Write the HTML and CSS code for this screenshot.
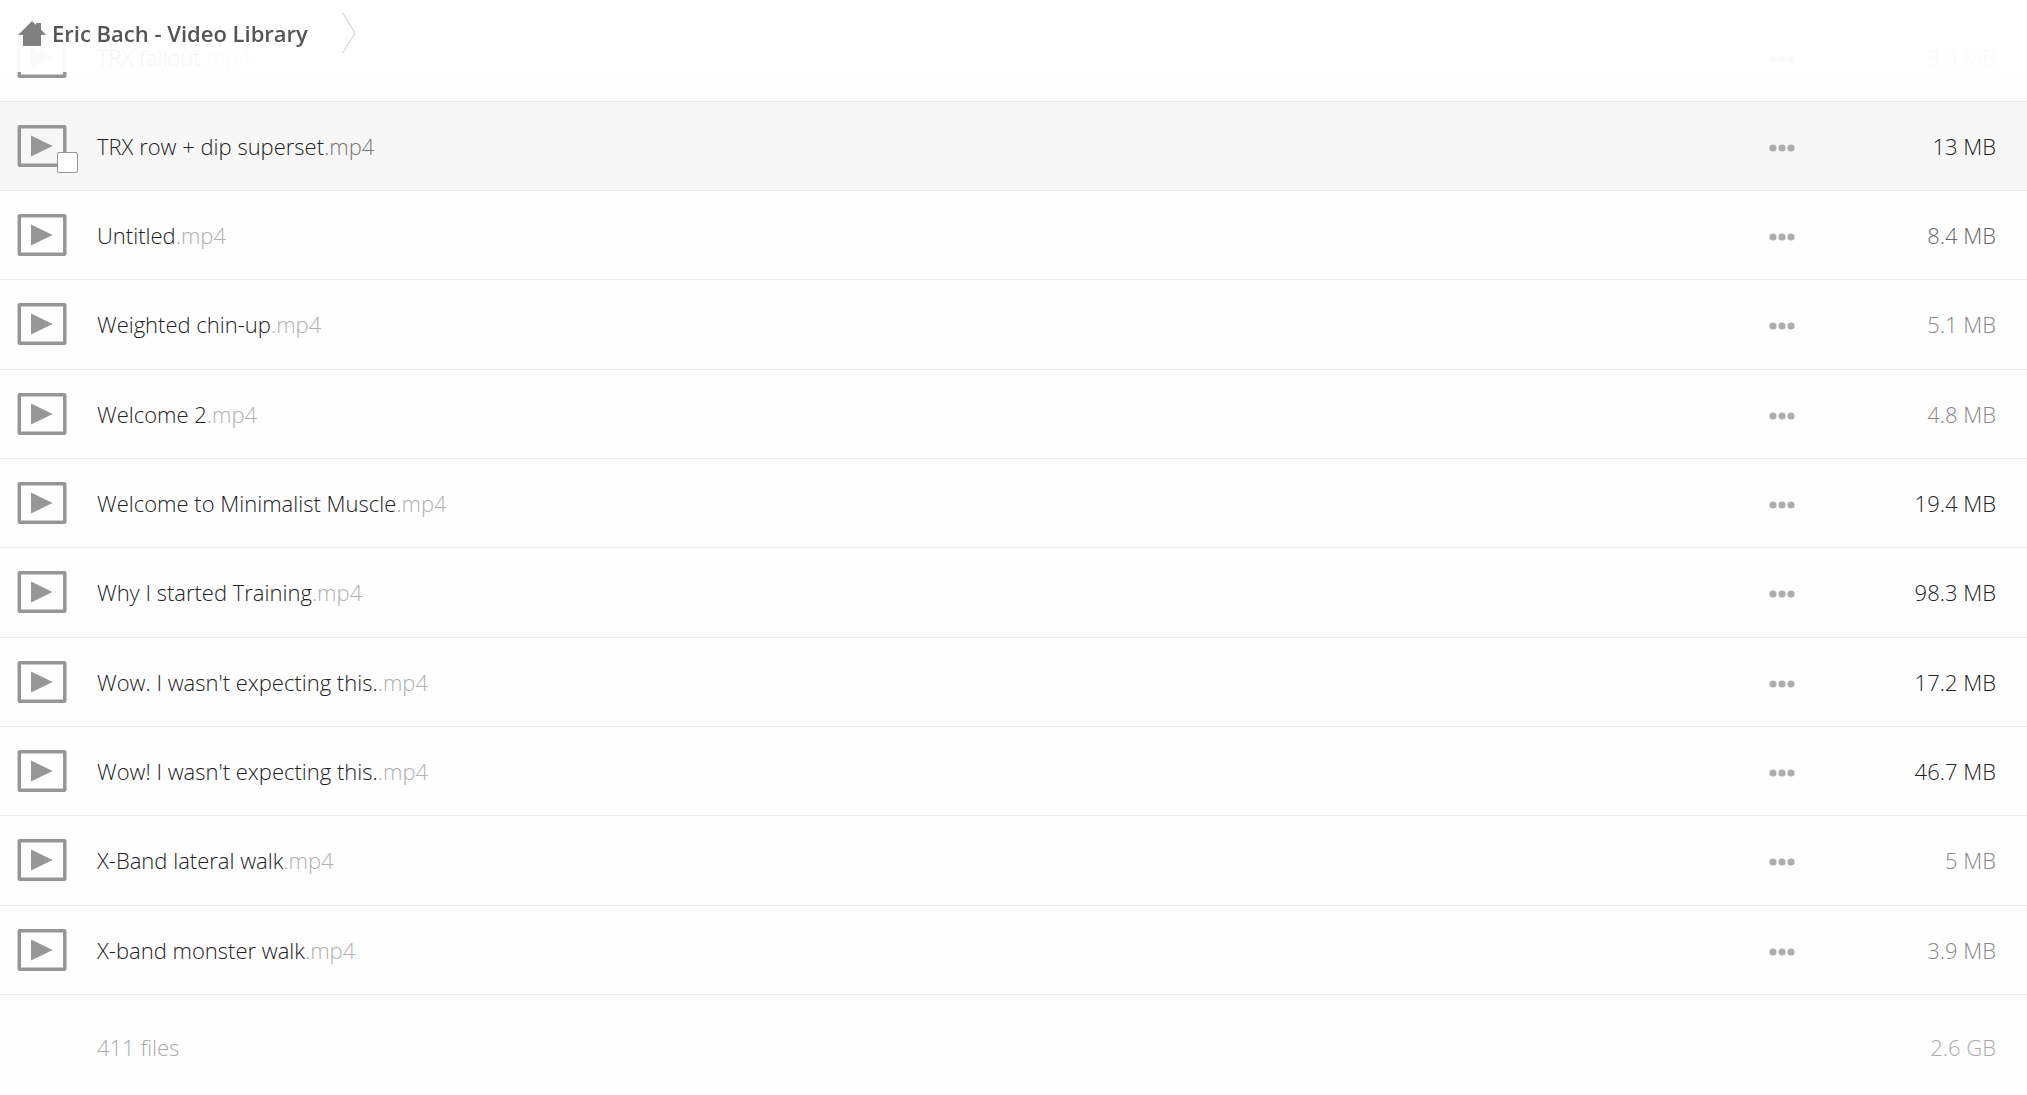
FILE: index.html
```html
<!DOCTYPE html>
<html lang="en">
<head>
<meta charset="utf-8">
<title>Eric Bach - Video Library</title>
<meta name="viewport" content="width=device-width, initial-scale=1">
<link rel="stylesheet" href="styles.css">
</head>
<body>
<svg class="sprite" aria-hidden="true">
  <symbol id="video" viewBox="0 0 50 42">
    <rect x="2.300" y="1.700" width="45.500" height="38.600" rx=".5" fill="none" stroke="currentColor" stroke-width="3.500"/>
    <path d="M14 10.500 35.500 21 14 31.500z" fill="currentColor"/>
  </symbol>
  <symbol id="dots" viewBox="0 0 26 8">
    <circle cx="4" cy="4" r="3.600"/><circle cx="13" cy="4" r="3.600"/><circle cx="22" cy="4" r="3.600"/>
  </symbol>
</svg>
<header class="topbar">
  <nav class="crumbs" aria-label="Breadcrumb">
    <a class="crumb" href="#">
      <svg class="home" viewBox="0 0 28 25" aria-hidden="true"><path d="M14 0 18 4V2h5v6.500L28 14h-5v11H5V14H0z" fill="currentColor"/></svg>
      <span>Eric Bach - Video Library</span>
    </a>
    <svg class="chevron" viewBox="0 0 14 42" aria-hidden="true"><path d="M.5.500 13 21 .5 41.500" fill="none" stroke="currentColor"/></svg>
  </nav>
</header>
<main class="library">
  <table class="files">
    <tbody>
      <tr><td class="icon"><svg class="video"><use href="#video"/></svg></td><td class="name"><a href="#">TRX fallout<span class="ext">.mp4</span></a></td><td class="menu"><button type="button" aria-label="Actions"><svg class="dots"><use href="#dots"/></svg></button></td><td class="size small">3.9 MB</td></tr>
      <tr class="hovered"><td class="icon"><div class="thumb"><svg class="video"><use href="#video"/></svg><input class="check" type="checkbox" aria-label="Select TRX row + dip superset.mp4"></div></td><td class="name"><a href="#">TRX row + dip superset<span class="ext">.mp4</span></a></td><td class="menu"><button type="button" aria-label="Actions"><svg class="dots"><use href="#dots"/></svg></button></td><td class="size">13 MB</td></tr>
      <tr><td class="icon"><svg class="video"><use href="#video"/></svg></td><td class="name"><a href="#">Untitled<span class="ext">.mp4</span></a></td><td class="menu"><button type="button" aria-label="Actions"><svg class="dots"><use href="#dots"/></svg></button></td><td class="size medium">8.4 MB</td></tr>
      <tr><td class="icon"><svg class="video"><use href="#video"/></svg></td><td class="name"><a href="#">Weighted chin-up<span class="ext">.mp4</span></a></td><td class="menu"><button type="button" aria-label="Actions"><svg class="dots"><use href="#dots"/></svg></button></td><td class="size small">5.1 MB</td></tr>
      <tr><td class="icon"><svg class="video"><use href="#video"/></svg></td><td class="name"><a href="#">Welcome 2<span class="ext">.mp4</span></a></td><td class="menu"><button type="button" aria-label="Actions"><svg class="dots"><use href="#dots"/></svg></button></td><td class="size small">4.8 MB</td></tr>
      <tr><td class="icon"><svg class="video"><use href="#video"/></svg></td><td class="name"><a href="#">Welcome to Minimalist Muscle<span class="ext">.mp4</span></a></td><td class="menu"><button type="button" aria-label="Actions"><svg class="dots"><use href="#dots"/></svg></button></td><td class="size">19.4 MB</td></tr>
      <tr><td class="icon"><svg class="video"><use href="#video"/></svg></td><td class="name"><a href="#">Why I started Training<span class="ext">.mp4</span></a></td><td class="menu"><button type="button" aria-label="Actions"><svg class="dots"><use href="#dots"/></svg></button></td><td class="size">98.3 MB</td></tr>
      <tr><td class="icon"><svg class="video"><use href="#video"/></svg></td><td class="name"><a href="#">Wow. I wasn't expecting this.<span class="ext">.mp4</span></a></td><td class="menu"><button type="button" aria-label="Actions"><svg class="dots"><use href="#dots"/></svg></button></td><td class="size">17.2 MB</td></tr>
      <tr><td class="icon"><svg class="video"><use href="#video"/></svg></td><td class="name"><a href="#">Wow! I wasn't expecting this.<span class="ext">.mp4</span></a></td><td class="menu"><button type="button" aria-label="Actions"><svg class="dots"><use href="#dots"/></svg></button></td><td class="size">46.7 MB</td></tr>
      <tr><td class="icon"><svg class="video"><use href="#video"/></svg></td><td class="name"><a href="#">X-Band lateral walk<span class="ext">.mp4</span></a></td><td class="menu"><button type="button" aria-label="Actions"><svg class="dots"><use href="#dots"/></svg></button></td><td class="size small">5 MB</td></tr>
      <tr><td class="icon"><svg class="video"><use href="#video"/></svg></td><td class="name"><a href="#">X-band monster walk<span class="ext">.mp4</span></a></td><td class="menu"><button type="button" aria-label="Actions"><svg class="dots"><use href="#dots"/></svg></button></td><td class="size small">3.9 MB</td></tr>
    </tbody>
    <tfoot>
      <tr><td></td><td class="name">411 files</td><td></td><td class="size">2.6 GB</td></tr>
    </tfoot>
  </table>
</main>
</body>
</html>
```

FILE: styles.css
```css
* { box-sizing: border-box; }

body {
  margin: 0;
  background: #fefefe;
  color: #222;
  font-family: "Open Sans", "Noto Sans", sans-serif;
  font-size: 22px;
  font-weight: 300;
  line-height: 30px;
}

a { color: inherit; text-decoration: none; }
svg { display: block; }
.sprite { position: absolute; width: 0; height: 0; }

/* Translucent bar over the scrolling list */
.topbar {
  position: fixed;
  top: 0;
  left: 0;
  right: 0;
  z-index: 1;
  height: 72px;
  padding: 12px 18px;
  background: rgba(255, 255, 255, .95);
}
.crumbs { display: flex; align-items: center; gap: 34px; }
.crumb {
  display: flex;
  align-items: center;
  gap: 6px;
  color: #555;
  font-weight: 600;
}
.home { width: 28px; height: 25px; color: #808080; }
.chevron { width: 14px; height: 42px; color: #ccc; }

.library { padding-top: 13px; }
.files { width: 100%; border-collapse: collapse; table-layout: fixed; }
.files td { padding: 0 0 2px; vertical-align: middle; }
.files tbody tr { height: 89px; box-shadow: inset 0 -1px #ebebeb; }
.files tbody tr:nth-child(3n + 1):not(:first-child) { height: 90px; }
.files .hovered { background: #f7f7f7; }

.files .icon { width: 97px; padding-left: 17px; }
.video { width: 50px; height: 42px; color: #969696; }
.thumb { position: relative; width: 50px; }
.check {
  appearance: none;
  position: absolute;
  right: -11px;
  bottom: -6px;
  width: 21px;
  height: 21px;
  margin: 0;
  border: 1px solid #969696;
  border-radius: 2px;
  background: #fff;
}

.ext { color: #b0b0b0; }
.hovered .ext { color: #777; }

.files .menu { width: 100px; padding-top: 4px; }
.menu button {
  display: block;
  margin: 0;
  padding: 0;
  border: 0;
  background: none;
}
.dots { width: 26px; height: 8px; fill: #adadad; }
.files .size { width: 158px; padding-right: 31px; text-align: right; }
.files .medium { color: #666; }
.files .small { color: #888; }

.files tfoot tr { height: 100px; }
.files tfoot td { padding-top: 6px; color: #aaa; }
```
